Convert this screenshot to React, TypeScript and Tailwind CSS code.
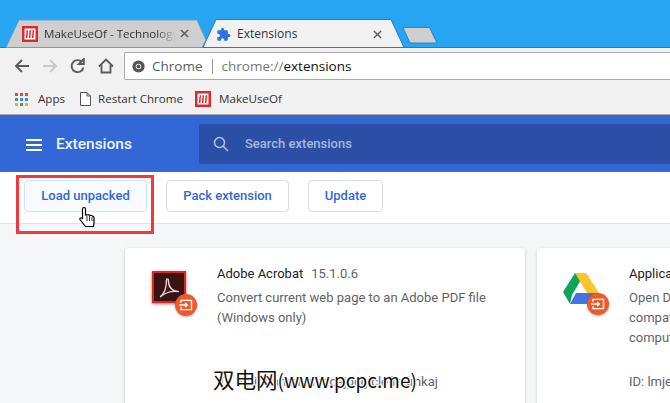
const sans = "font-['Roboto',sans-serif]";

function MuoIcon({ className }: { className: string }) {
  return (
    <svg viewBox="0 0 16 16" className={className}>
      <rect width="16" height="16" fill="#e3262b" />
      <path d="M2.500 2.500h11v11h-11z" fill="#fff" />
      <path d="M4.600 4.200L3.900 12h1.500l.7-7.800zM7.600 4.200L6.900 12h1.500l.7-7.800zM10.600 4.200L9.900 12h1.500l.7-7.800z" fill="#e3262b" />
      <path d="M2.500 12.600h4" stroke="#fff" strokeWidth=".8" />
    </svg>
  );
}

function LauncherBadge({ className }: { className: string }) {
  return (
    <svg viewBox="0 0 24 24" className={`${className} drop-shadow-[0_1px_1px_rgba(0,0,0,0.3)]`}>
      <circle cx="12" cy="12" r="12" fill="#ee5a2c" />
      <path d="M6.500 9.500V7h11.500v10H6.500v-2.500" stroke="#fff" strokeWidth="1.500" fill="none" />
      <path d="M4.500 12h8.500M11 9.800l2.400 2.200L11 14.200" stroke="#fff" strokeWidth="1.500" fill="none" />
    </svg>
  );
}

function ExtensionCard({ icon, name, version, lines, id, width }: { icon: React.ReactNode; name: string; version?: string; lines: string[]; id: string; width: string }) {
  return (
    <article className={`${width} shrink-0 h-[190px] rounded-[4px] bg-white shadow-[0_1px_3px_rgba(60,64,67,0.3)] pl-[92px] pt-[16px] relative`}>
      <div className="absolute left-[24px] top-[18px]">{icon}</div>
      <div className="flex gap-[8px] text-[13px] leading-[20px] whitespace-nowrap">
        <span className="text-[#202124]">{name}</span>
        {version && <span className="text-[#5f6368]">{version}</span>}
      </div>
      <div className="mt-[4px] text-[13px] leading-[20px] text-[#5f6368] whitespace-nowrap">
        {lines.map((l) => (
          <p key={l}>{l}</p>
        ))}
      </div>
      <p className="absolute left-[92px] top-[124px] text-[13px] leading-[20px] text-[#5f6368] whitespace-nowrap">{id}</p>
    </article>
  );
}

export default function App() {
  return (
    <div className={`relative w-[670px] h-[403px] overflow-hidden flex flex-col bg-[#f5f6f8] ${sans}`}>
      {/* tab strip */}
      <div className="relative h-[48px] shrink-0 bg-[#27a5f2] font-['Open_Sans',sans-serif] text-[11.600px] text-[#333]">
        <svg viewBox="0 0 670 48" className="absolute inset-0 w-[670px] h-[48px]">
          <path d="M0 47.500h670" stroke="#1f7fbd" fill="none" />
          <path d="M6 47.500L19 20h178l9 20-4 7.500z" fill="#cfcfcf" stroke="#6f9fc0" />
          <path d="M203 47.500L216 19.500h175l13 28z" fill="#f1f1f1" stroke="#1f7fbd" />
          <path d="M403 27.500h26.500l7.500 15.500h-27z" fill="#cfcfcf" stroke="#2a86c4" strokeWidth="1" />
        </svg>
        <div className="absolute left-[22px] top-[25px] flex items-center w-[177px]">
          <MuoIcon className="w-[16px] h-[16px] shrink-0" />
          <span className="ml-[6px] w-[132px] overflow-hidden whitespace-nowrap [mask-image:linear-gradient(to_right,#000_85%,transparent)]">MakeUseOf - Technology Reviews</span>
          <svg viewBox="0 0 10 10" className="ml-[4px] w-[9px] h-[9px]"><path d="M1 1l8 8M9 1l-8 8" stroke="#5a5a5a" strokeWidth="1.500" /></svg>
        </div>
        <div className="absolute left-[216px] top-[25px] flex items-center w-[170px]">
          <svg viewBox="0 0 24 24" className="w-[15px] h-[15px] shrink-0"><path fill="#2e74e0" d="M20.500 11H19V7a2 2 0 0 0-2-2h-4V3.500a2.500 2.500 0 0 0-5 0V5H4a2 2 0 0 0-2 2v3.800h1.500a2.700 2.700 0 0 1 0 5.400H2V20a2 2 0 0 0 2 2h3.800v-1.500a2.700 2.700 0 0 1 5.400 0V22H17a2 2 0 0 0 2-2v-4h1.500a2.500 2.500 0 0 0 0-5z" /></svg>
          <span className="ml-[6px] text-[12px]">Extensions</span>
          <svg viewBox="0 0 10 10" className="ml-auto mr-[4px] w-[9px] h-[9px]"><path d="M1 1l8 8M9 1l-8 8" stroke="#5a5a5a" strokeWidth="1.500" /></svg>
        </div>
      </div>

      {/* toolbar */}
      <div className="h-[36px] shrink-0 bg-[#f1f1f1] flex items-center font-['Open_Sans',sans-serif]">
        <div className="w-[124px] shrink-0 flex items-center pl-[14px] gap-[12px]">
          <svg viewBox="0 0 16 16" className="w-[16px] h-[16px]"><path d="M15 8H2M8 2L2 8l6 6" stroke="#5a5a5a" strokeWidth="1.900" fill="none" /></svg>
          <svg viewBox="0 0 16 16" className="w-[16px] h-[16px]"><path d="M1 8h13M8 2l6 6-6 6" stroke="#c8c8c8" strokeWidth="1.900" fill="none" /></svg>
          <svg viewBox="0 0 16 16" className="w-[16px] h-[16px]"><path d="M13.500 9.500A6 6 0 1 1 12 4M13.800 1v5h-5z" stroke="#5a5a5a" strokeWidth="1.900" fill="none" /></svg>
          <svg viewBox="0 0 16 16" className="w-[16px] h-[16px]"><path d="M1 8.500L8 1.500l7 7M3.500 7v7.500h9V7" stroke="#5a5a5a" strokeWidth="1.800" fill="none" /></svg>
        </div>
        <div className="flex-1 h-[28px] bg-white border-y border-l border-[#aaa] rounded-l-[2px] flex items-center pl-[7px] text-[13.500px] whitespace-nowrap">
          <svg viewBox="0 0 16 16" className="w-[13px] h-[13px]">
            <circle cx="8" cy="8" r="7.500" fill="#555" />
            <circle cx="8" cy="8" r="3.400" fill="#fff" />
            <circle cx="8" cy="8" r="2.400" fill="#555" />
          </svg>
          <span className="ml-[7px] text-[#5a5a5a]">Chrome</span>
          <span className="mx-[9px] w-px h-[15px] bg-[#999]" />
          <span className="text-[#777]">chrome://</span>
          <span className="text-[#111]">extensions</span>
        </div>
      </div>

      {/* bookmarks */}
      <div className="h-[31px] shrink-0 bg-[#f1f1f1] flex items-center pl-[15px] text-[11.600px] text-[#333] font-['Open_Sans',sans-serif] border-b border-[#a8a8a8]">
        <svg viewBox="0 0 13 13" className="w-[13px] h-[13px]">
          <rect x="0" y="0" width="3" height="3" fill="#e8453c" /><rect x="5" y="0" width="3" height="3" fill="#e8453c" /><rect x="10" y="0" width="3" height="3" fill="#e8453c" />
          <rect x="0" y="5" width="3" height="3" fill="#34a853" /><rect x="5" y="5" width="3" height="3" fill="#4285f4" /><rect x="10" y="5" width="3" height="3" fill="#4285f4" />
          <rect x="0" y="10" width="3" height="3" fill="#f4a81c" /><rect x="5" y="10" width="3" height="3" fill="#34a853" /><rect x="10" y="10" width="3" height="3" fill="#f4a81c" />
        </svg>
        <span className="ml-[10px]">Apps</span>
        <svg viewBox="0 0 11 14" className="ml-[15px] w-[11px] h-[14px]"><path d="M.5.5h6.500l3.500 3.500v9.500H.5zM7 .5V4h3.500" stroke="#555" fill="#fff" /></svg>
        <span className="ml-[7px]">Restart Chrome</span>
        <MuoIcon className="ml-[12px] w-[16px] h-[16px]" />
        <span className="ml-[8px]">MakeUseOf</span>
      </div>

      {/* extensions header */}
      <header className="h-[57px] shrink-0 bg-[#3367d6] flex items-center">
        <div className="w-[199px] shrink-0 flex items-center pl-[26px] pt-[2px] text-white">
          <svg viewBox="0 0 16 12" className="w-[16px] h-[12px]"><path d="M0 1h16M0 6h16M0 11h16" stroke="#fff" strokeWidth="1.800" /></svg>
          <h1 className="ml-[14px] text-[15.500px] font-medium text-[#eef3fc]">Extensions</h1>
        </div>
        <div className="flex-1 h-[40px] bg-[#2a4fa5] rounded-l-[2px] flex items-center pl-[14px] text-[13px] font-medium text-[#a6b7de]">
          <svg viewBox="0 0 16 16" className="w-[16px] h-[16px]"><circle cx="6.500" cy="6.500" r="5" stroke="#b4c4e6" strokeWidth="1.500" fill="none" /><path d="M10 10l5 5" stroke="#b4c4e6" strokeWidth="1.500" /></svg>
          <span className="ml-[16px]">Search extensions</span>
        </div>
      </header>

      {/* dev actions */}
      <div className="h-[52px] shrink-0 bg-white border-b border-[#e3e3e3] flex items-start pt-[8px] pl-[24px] gap-[19px] text-[13px] font-medium text-[#3367d6]">
        <button className="w-[123px] h-[32px] rounded-[4px] border border-[#d2e3fc] bg-[#f7faff]">Load unpacked</button>
        <button className="w-[123px] h-[32px] rounded-[4px] border border-[#dadce0] bg-white">Pack extension</button>
        <button className="w-[75px] h-[32px] rounded-[4px] border border-[#dadce0] bg-white">Update</button>
      </div>

      {/* cards */}
      <main className="flex gap-[12px] pl-[125px] pt-[24px]">
        <ExtensionCard
          width="w-[400px]"
          name="Adobe Acrobat"
          version="15.1.0.6"
          lines={["Convert current web page to an Adobe PDF file", "(Windows only)"]}
          id="ID: efaidnbmnnnibpcajpcglclefindmkaj"
          icon={
            <div className="relative w-[48px] h-[48px]">
              <div className="absolute left-[3px] top-[5px] w-[34px] h-[32px] bg-[#3a1412] border-2 border-[#e0261c] shadow-[0_1px_3px_rgba(0,0,0,0.5)] flex items-center justify-center">
                <svg viewBox="0 0 24 24" className="w-[25px] h-[25px]"><path d="M3 21c4-3 6-9 6-15 0-3 2-3 2 0 0 6 4 10 10 10-6-1-12 0-18 5z" stroke="#e8d8d6" strokeWidth="1.300" fill="none" /></svg>
              </div>
              <LauncherBadge className="absolute left-[26px] top-[28px] w-[22px] h-[22px]" />
            </div>
          }
        />
        <ExtensionCard
          width="w-[300px]"
          name="Application Launcher for Drive"
          lines={["Open Drive files directly from your browser via", "compatible applications installed on your", "computer."]}
          id="ID: lmjegmlicamnimmfhcmpkclmigmmcbeh"
          icon={
            <div className="relative w-[48px] h-[48px]">
              <svg viewBox="0 0 36 31" className="absolute left-[2px] top-[7px] w-[36px] h-[31px]">
                <path d="M12 0h10L9 22 7 31 0 19z" fill="#0fa35e" />
                <path d="M12 0h11l13 20H24z" fill="#fec42e" />
                <path d="M7 31l6-11h23l-6 11z" fill="#3f76e4" />
              </svg>
              <LauncherBadge className="absolute left-[26px] top-[27px] w-[22px] h-[22px]" />
            </div>
          }
        />
      </main>

      {/* screenshot annotations */}
      <div className="absolute left-[16px] top-[175px] w-[138px] h-[59px] border-[3px] border-[#f0393e]" />
      <svg viewBox="0 0 17 22" className="absolute left-[79px] top-[206px] w-[17px] h-[22px]">
        <path d="M5 1.500c1 0 1.500.7 1.500 1.500v6l1-.2c.8-.2 1.500.2 1.500.2s1.500-.3 2 .3c1-.2 2 .2 2.500.8.700 0 1.500.5 1.500 1.500v4.900L14.500 20.500h-8L1 13.500c-.5-1 .5-2.200 2-1.500l.5 1V3c0-1 .5-1.500 1.500-1.500z" fill="#fff" stroke="#000" strokeWidth="1.200" />
        <path d="M8 10v5M10.500 10v5M13 11v4" stroke="#000" strokeWidth=".8" />
      </svg>
      <div className="absolute left-[213px] top-[366px] text-[21.500px] leading-[26px] whitespace-nowrap text-[#111] font-['Noto_Sans_CJK_SC',sans-serif] [text-shadow:-1px_-1px_0_#fff,1px_-1px_0_#fff,-1px_1px_0_#fff,1px_1px_0_#fff]">
        双电网<span className="text-[19px]">(www.pcpc.me)</span>
      </div>
    </div>
  );
}
